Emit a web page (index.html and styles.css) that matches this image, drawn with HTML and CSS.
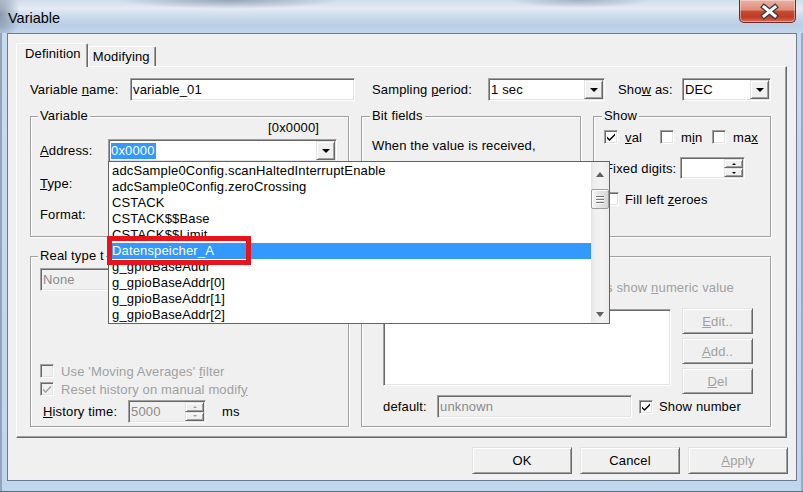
FILE: index.html
```html
<!DOCTYPE html>
<html>
<head>
<meta charset="utf-8">
<title>Variable</title>
<link rel="stylesheet" href="styles.css">
</head>
<body>
<div class="window">
  <div class="titlebar">
    <span class="title">Variable</span>
    <div class="close">
      <svg width="55" height="22" viewBox="0 0 55 22"><path d="M24 7 L35 16 M35 7 L24 16" stroke="#3a3a3a" stroke-width="5.5" stroke-linecap="square" fill="none"/><path d="M24 7 L35 16 M35 7 L24 16" stroke="#fff" stroke-width="3" stroke-linecap="square" fill="none"/></svg>
    </div>
  </div>
  <div class="frame">
    <div class="client">
      <div class="tabs">
        <div class="tab active">Definition</div>
        <div class="tab">Modifying</div>
      </div>
      <div class="pane">
        <div class="row1">
          <span class="lbl w100">Variable <u>n</u>ame:</span>
          <div class="edit w225"><span class="ev">variable_01</span></div>
          <span class="lbl w116 ml17">Sampling <u>p</u>eriod:</span>
          <div class="combo w117"><span class="cv">1 sec</span><span class="dd"><i class="tri"></i></span></div>
          <span class="lbl w64 ml13">Sho<u>w</u> as:</span>
          <div class="combo w89"><span class="cv">DEC</span><span class="dd"><i class="tri"></i></span></div>
        </div>
        <div class="cols">
          <div class="col left">
            <div class="group g-var">
              <div class="gtitle">Variable</div>
              <div class="hex">[0x0000]</div>
              <div class="frow addr">
                <span class="flbl"><u>A</u>ddress:</span>
                <div class="combo w229 open">
                  <span class="cv"><span class="sel">0x0000</span></span><span class="dd"><i class="tri"></i></span>
                  <div class="droplist">
                    <div class="items">
                      <div class="it">adcSample0Config.scanHaltedInterruptEnable</div>
                      <div class="it">adcSample0Config.zeroCrossing</div>
                      <div class="it">CSTACK</div>
                      <div class="it">CSTACK$$Base</div>
                      <div class="it">CSTACK$$Limit</div>
                      <div class="it hl">Datenspeicher_A</div>
                      <div class="it">g_gpioBaseAddr</div>
                      <div class="it">g_gpioBaseAddr[0]</div>
                      <div class="it">g_gpioBaseAddr[1]</div>
                      <div class="it">g_gpioBaseAddr[2]</div>
                    </div>
                    <div class="vscroll">
                      <div class="sbb up"><svg width="8" height="5" viewBox="0 0 8 5"><polygon points="0,5 8,5 4,0" fill="#606060"/></svg></div>
                      <div class="thumb"><i></i><i></i><i></i></div>
                      <div class="sbfill"></div>
                      <div class="sbb down"><svg width="8" height="5" viewBox="0 0 8 5"><polygon points="0,0 8,0 4,5" fill="#606060"/></svg></div>
                    </div>
                    <div class="mark"></div>
                  </div>
                </div>
              </div>
              <div class="frow r-type">
                <span class="flbl"><u>T</u>ype:</span>
                <div class="combo w229"><span class="cv"></span><span class="dd"><i class="tri"></i></span></div>
              </div>
              <div class="frow r-format">
                <span class="flbl">Format:</span>
                <div class="combo w229"><span class="cv"></span><span class="dd"><i class="tri"></i></span></div>
              </div>
            </div>
            <div class="group g-real">
              <div class="gtitle">Real type t</div>
              <div class="combo dis w190 none"><span class="cv">None</span><span class="dd"><i class="tri gray"></i></span></div>
              <div class="chk dis first"><span class="cb"></span><span class="ct">Use 'Moving Averages' <u>f</u>ilter</span></div>
              <div class="chk dis"><span class="cb"><svg width="10" height="10" viewBox="0 0 10 10"><path d="M1 4.5 L3.5 7 L9 1.5 L9 3.5 L3.5 9 L1 6.5 Z" fill="#a0a0a0"/></svg></span><span class="ct">Reset history on manual modif<u>y</u></span></div>
              <div class="hist">
                <span class="hlbl"><u>H</u>istory time:</span>
                <div class="spin dis w78 h23"><span class="sv">5000</span><span class="sbtns"><span class="sb"><i class="ua g"></i></span><span class="sb"><i class="da g"></i></span></span></div>
                <span class="ms">ms</span>
              </div>
            </div>
          </div>
          <div class="col right">
            <div class="toprow">
              <div class="group g-bits">
                <div class="gtitle">Bit fields</div>
                <div class="btext">When the value is received,</div>
              </div>
              <div class="group g-show">
                <div class="gtitle">Show</div>
                <div class="showrow">
                  <div class="sitem w56"><span class="cb"><svg width="10" height="10" viewBox="0 0 10 10"><path d="M1 4.5 L3.5 7 L9 1.5 L9 3.5 L3.5 9 L1 6.5 Z" fill="#000"/></svg></span><span class="ct"><u>v</u>al</span></div>
                  <div class="sitem w52"><span class="cb"></span><span class="ct">m<u>i</u>n</span></div>
                  <div class="sitem"><span class="cb"></span><span class="ct">ma<u>x</u></span></div>
                </div>
                <div class="fixrow">
                  <span class="fxl">Fixed digits:</span>
                  <div class="spin w65 h22"><span class="sv"></span><span class="sbtns"><span class="sb"><i class="ua"></i></span><span class="sb"><i class="da"></i></span></span></div>
                </div>
                <div class="fillrow"><span class="cb"></span><span class="ct">Fill left <u>z</u>eroes</span></div>
              </div>
            </div>
            <div class="group g-enum">
              <div class="gtitle gblank"></div>
              <div class="numrow"><span class="ct">s show <u>n</u>umeric value</span></div>
              <div class="mainrow">
                <div class="listbox"></div>
                <div class="btncol">
                  <button class="btn sm dis"><u>E</u>dit..</button>
                  <button class="btn sm dis"><u>A</u>dd..</button>
                  <button class="btn sm dis"><u>D</u>el</button>
                </div>
              </div>
              <div class="defrow">
                <span class="dlbl">default:</span>
                <div class="edit dis w195"><span class="ev">unknown</span></div>
                <span class="cb sn"><svg width="10" height="10" viewBox="0 0 10 10"><path d="M1 4.5 L3.5 7 L9 1.5 L9 3.5 L3.5 9 L1 6.5 Z" fill="#000"/></svg></span>
                <span class="ct snt">Show number</span>
              </div>
            </div>
          </div>
        </div>
      </div>
      <div class="buttons">
        <button class="btn big">OK</button>
        <button class="btn big">Cancel</button>
        <button class="btn big dis"><u>A</u>pply</button>
      </div>
    </div>
  </div>
</div>
</body>
</html>
```

FILE: styles.css
```css
* { box-sizing: border-box; }
html, body { margin: 0; padding: 0; }
body {
  width: 803px; height: 492px; overflow: hidden;
  font: 13px "Liberation Sans", Arial, sans-serif;
  letter-spacing: 0.15px;
  color: #000; background: #fff;
}
u { text-decoration: underline; text-underline-offset: 1px; }

.window {
  width: 803px; height: 492px;
  display: flex; flex-direction: column;
  background: linear-gradient(180deg, #c9dbee 0%, #bfd6ef 100%);
  box-shadow: inset 2px 0 0 #93a4b9, inset -2px 0 0 #98aac0;
  border-bottom: 1px solid #5d6d80;
}
.titlebar {
  height: 33px; flex: none;
  display: flex; justify-content: space-between; align-items: flex-start;
  background:
    radial-gradient(ellipse 110px 9px at 230px 0px, rgba(80,95,120,.45), transparent),
    radial-gradient(ellipse 70px 8px at 580px 0px, rgba(80,95,120,.35), transparent),
    radial-gradient(ellipse 20px 30px at 0px 14px, rgba(80,95,120,.55), transparent),
    linear-gradient(180deg, #cfdcea 0%, #e3ebf5 25%, #c4d4e8 60%, #b9cde6 80%, #c6d9ee 100%);
}
.title { margin: 10px 0 0 8px; font-size: 14.5px; line-height: 16px; letter-spacing: 0; }
.close {
  width: 57px; height: 23px; margin-right: 7px;
  border: 1px solid #6e2a22; border-top: none;
  border-radius: 0 0 5px 5px;
  background: linear-gradient(180deg, #eab1a4 0%, #de8c7a 45%, #c94a33 52%, #c03b26 78%, #d66e58 100%);
  box-shadow: inset 0 0 0 1px rgba(255,235,230,.45);
}
.close svg { display: block; }

.frame { flex: 1; display: flex; padding: 0 6px 10px 7px; }
.client {
  flex: 1; display: flex; flex-direction: column;
  border: 1px solid #6b7b8e; background: #f0f0f0;
  padding: 9px 9px 0 8px;
}

/* tabs */
.tabs { display: flex; align-items: flex-end; height: 23px; position: relative; z-index: 1; }
.tab {
  height: 20px; line-height: 19px; padding: 0 5px 0 4px;
  border: 1px solid; border-color: #fff #696969 transparent #fff; border-bottom: none;
  box-shadow: inset -1px 0 0 #a0a0a0;
  border-radius: 2px 2px 0 0; background: #f0f0f0;
}
.tab.active { height: 24px; line-height: 20px; margin-bottom: -1px; padding: 0 6px 0 8px; }

.pane {
  height: 372px; position: relative;
  border: 1px solid; border-color: #fff #696969 #696969 #fff;
  box-shadow: inset -1px -1px 0 #a0a0a0;
  padding: 11px 0 0 13px;
}

/* generic controls */
.edit, .combo, .spin, .listbox, .cb {
  background: #fff;
  border: 1px solid; border-color: #a0a0a0 #fff #fff #a0a0a0;
  box-shadow: inset 1px 1px 0 #696969, inset -1px -1px 0 #e3e3e3;
}
.edit, .combo, .spin { height: 23px; display: flex; padding: 1px; position: relative; }
.edit .ev, .combo .cv, .spin .sv { flex: 1; line-height: 19px; padding-left: 1px; white-space: nowrap; overflow: hidden; }
.dis.edit, .dis.combo, .dis.spin { background: #f0f0f0; color: #8a8a8a; }
.combo.open .cv { overflow: visible; }
.dd, .sb, .btn {
  background: #f0f0f0;
  border: 1px solid; border-color: #e3e3e3 #696969 #696969 #e3e3e3;
  box-shadow: inset 1px 1px 0 #fff, inset -1px -1px 0 #a0a0a0;
}
.dd { width: 19px; display: flex; align-items: center; justify-content: center; }
.tri { width: 0; height: 0; border-left: 4px solid transparent; border-right: 4px solid transparent; border-top: 4px solid #000; margin-top: 1px; }
.tri.gray { border-top-color: #a0a0a0; }
.sel { background: #3399ff; color: #fff; padding: 0 1px 0 0; display: inline-block; line-height: 16px; }

.sbtns { width: 19px; display: flex; flex-direction: column; }
.sb { flex: 1; display: flex; align-items: center; justify-content: center; }
.ua { width: 0; height: 0; border-left: 2px solid transparent; border-right: 2px solid transparent; border-bottom: 2px solid #000; }
.da { width: 0; height: 0; border-left: 2px solid transparent; border-right: 2px solid transparent; border-top: 2px solid #000; }
.ua.g { border-bottom-color: #a0a0a0; }
.da.g { border-top-color: #a0a0a0; }

.cb { width: 14px; height: 14px; flex: none; display: flex; align-items: center; justify-content: center; }
.cb svg { display: block; }
.dis .cb { background: #f0f0f0; }

.btn { font: inherit; letter-spacing: inherit; color: #000; padding: 0; display: flex; align-items: center; justify-content: center; }
.btn.dis { color: #a0a0a0; }

.w56 { width: 56px; } .w52 { width: 52px; } .w64 { width: 64px; } .w65 { width: 65px; }
.w78 { width: 78px; } .w89 { width: 89px; } .w100 { width: 100px; } .w116 { width: 116px; }
.w117 { width: 117px; } .w190 { width: 190px; } .w195 { width: 195px; } .w225 { width: 225px; }
.w229 { width: 229px; }
.h22 { height: 22px; } .h23 { height: 23px; }
.ml13 { margin-left: 13px; } .ml17 { margin-left: 17px; }

/* row 1 */
.row1 { display: flex; align-items: center; height: 23px; }
.lbl { white-space: nowrap; }

/* columns */
.cols { display: flex; gap: 12px; margin-top: 15px; }
.col { display: flex; flex-direction: column; gap: 19px; }
.col.left { width: 319px; }
.col.right { width: 410px; }
.toprow { display: flex; gap: 12px; }

.group {
  border: 1px solid #a0a0a0;
  box-shadow: inset 1px 1px 0 #fff, 1px 1px 0 #fff;
}
.gtitle {
  width: max-content; height: 16px; line-height: 16px; margin: -9px 0 0 -2px; padding: 0 2px;
  background: #f0f0f0;
}
.gtitle.gblank { background: transparent; }

/* variable group */
.g-var { height: 121px; padding-left: 9px; }
.hex { margin: -4px 0 0 228px; line-height: 16px; }
.frow { display: flex; align-items: center; height: 23px; }
.flbl { width: 68px; }
.addr { margin-top: 3px; }
.r-type { margin-top: 10px; }
.r-format { margin-top: 8px; }

/* drop list */
.droplist {
  position: absolute; left: -1px; top: 21px; z-index: 10;
  width: 502px; height: 163px;
  border: 1px solid #646464; background: #fff;
  display: flex; color: #000;
}
.items { flex: 1; padding-top: 1px; overflow: hidden; }
.it { height: 16px; line-height: 16px; padding-left: 3px; white-space: nowrap; }
.it.hl { background: #3399ff; color: #fff; }
.vscroll {
  width: 18px; display: flex; flex-direction: column;
  background: linear-gradient(90deg, #e3e3e3 0, #eeeeee 3px, #f3f3f3 60%, #ececec 100%);
}
.sbb { height: 18px; display: flex; justify-content: center; }
.sbb.up { align-items: flex-end; padding-bottom: 3px; }
.sbb.down { align-items: flex-start; padding-top: 7px; }
.sbb svg { display: block; }
.thumb {
  height: 20px; margin: 9px 0 0 0;
  border: 1px solid #9c9c9c; border-radius: 2px;
  background: linear-gradient(90deg, #f4f4f4, #e2e2e2 60%, #d6d6d6);
  box-shadow: inset 1px 1px 0 #fff;
  display: flex; flex-direction: column; align-items: center; justify-content: center; gap: 2px;
}
.thumb i { display: block; width: 8px; height: 1px; background: #777; box-shadow: 0 1px 0 #fff; }
.sbfill { flex: 1; }
.mark {
  position: absolute; left: -2px; top: 74px;
  width: 144px; height: 29px;
  border: 5px solid #e8131b;
}

/* real type group */
.g-real { height: 171px; padding-left: 9px; }
.none { margin-top: 4px; }
.chk { display: flex; align-items: center; height: 18px; gap: 7px; }
.chk.first { margin-top: 71px; }
.chk.dis .ct { color: #a0a0a0; }
.hist { display: flex; align-items: center; height: 23px; margin-top: 2px; }
.hlbl { width: 85px; margin-left: 3px; }
.ms { margin-left: 16px; }

/* bit fields */
.g-bits { width: 220px; height: 121px; padding-left: 10px; }
.btext { margin-top: 14px; line-height: 16px; }

/* show */
.g-show { width: 178px; height: 121px; padding-left: 10px; }
.showrow { display: flex; height: 16px; margin-top: 5px; align-items: center; }
.sitem { display: flex; align-items: center; gap: 7px; }
.fixrow { display: flex; align-items: center; height: 22px; margin: 12px 0 0 1px; }
.fxl { width: 75px; }
.fillrow { display: flex; align-items: center; height: 18px; margin: 11px 0 0 1px; gap: 6px; }

/* lower right */
.g-enum { height: 171px; padding-left: 0; }
.numrow { display: flex; justify-content: flex-end; align-items: center; height: 16px; margin-top: 15px; padding-right: 36px; color: #a0a0a0; }
.mainrow { display: flex; align-items: flex-start; margin: 13px 0 0 21px; }
.listbox { width: 288px; height: 77px; margin-top: 1px; }
.btncol { display: flex; flex-direction: column; gap: 4px; margin-left: 11px; }
.btn.sm { width: 71px; height: 26px; }
.defrow { display: flex; align-items: center; height: 23px; margin: 1px 0 0 21px; }
.dlbl { width: 54px; }
.sn { margin-left: 7px; }
.snt { margin-left: 6px; }

/* bottom buttons */
.buttons { display: flex; justify-content: flex-end; gap: 8px; margin: 9px -1px 0 0; }
.btn.big { width: 100px; height: 27px; }
```
